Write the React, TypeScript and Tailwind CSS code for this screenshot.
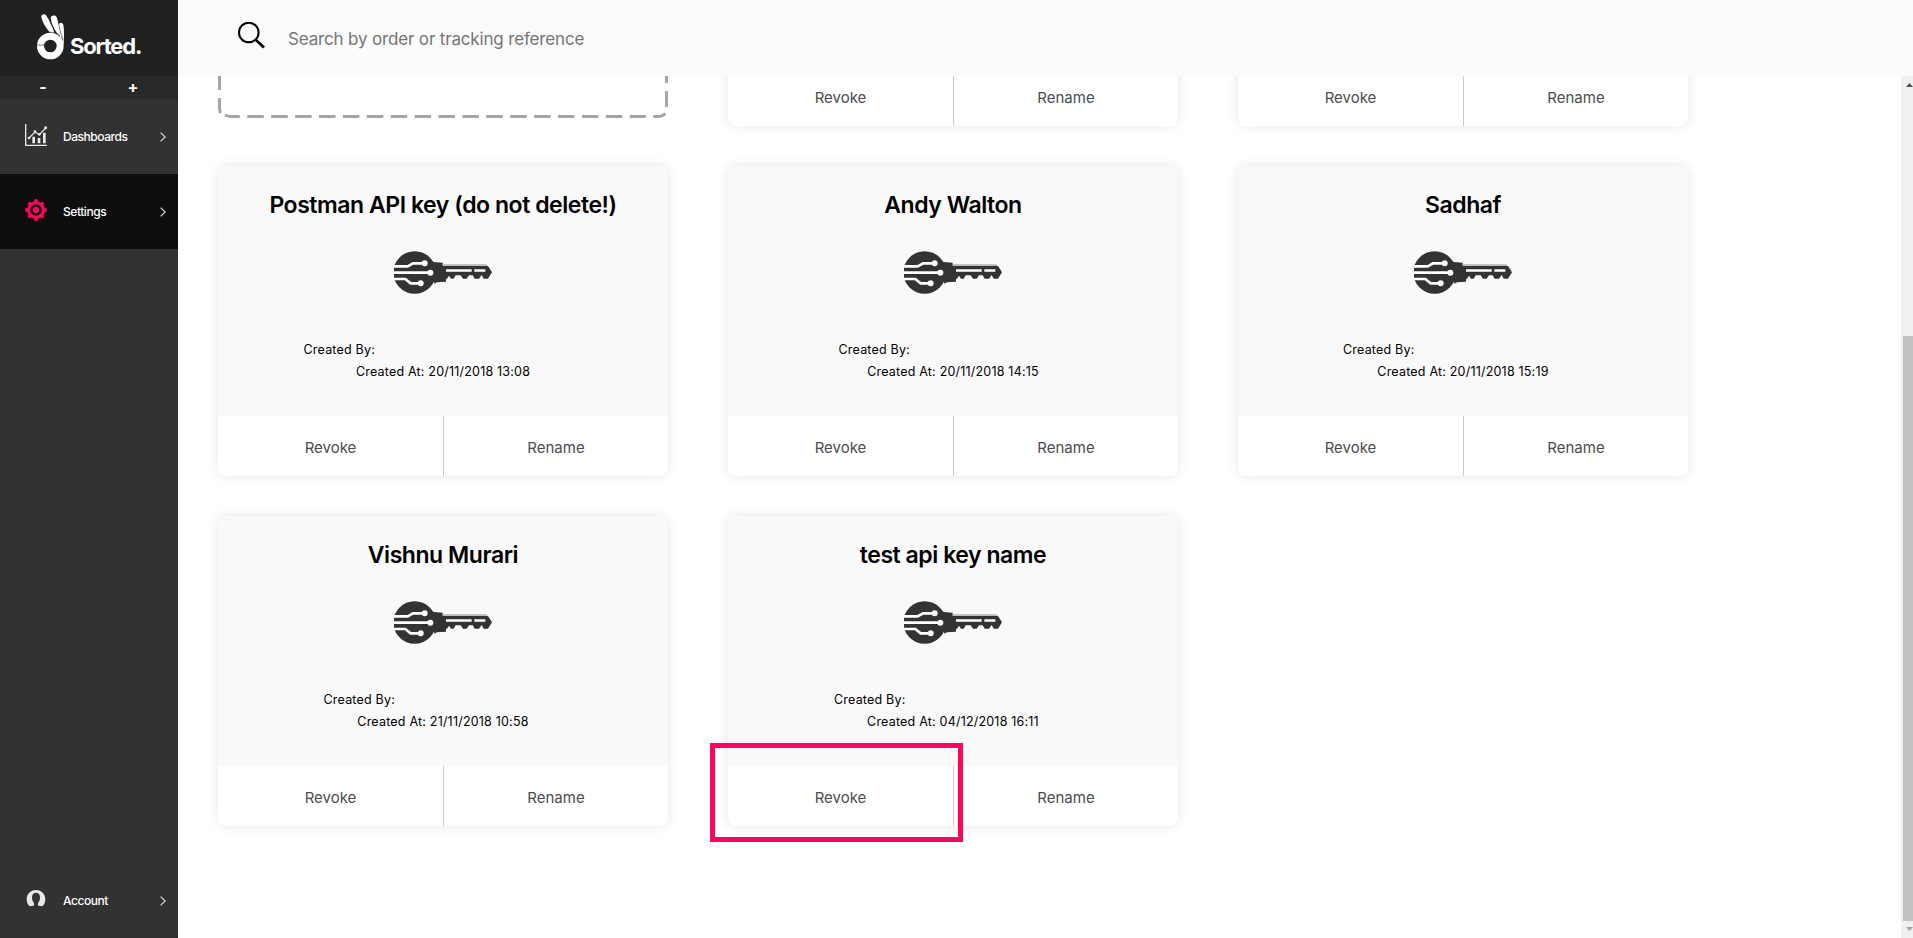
import type { ReactNode } from "react";

type ApiKey = { name: string; createdAt: string; byWidth: string };

const KEYS: ApiKey[] = [
  { name: "Postman API key (do not delete!)", createdAt: "20/11/2018 13:08", byWidth: "w-[279px]" },
  { name: "Andy Walton", createdAt: "20/11/2018 14:15", byWidth: "w-[229px]" },
  { name: "Sadhaf", createdAt: "20/11/2018 15:19", byWidth: "w-[240px]" },
  { name: "Vishnu Murari", createdAt: "21/11/2018 10:58", byWidth: "w-[239px]" },
  { name: "test api key name", createdAt: "04/12/2018 16:11", byWidth: "w-[238px]" },
];

function HandLogo() {
  return (
    <svg className="h-[47px] w-[31px] shrink-0" viewBox="105 38 93 141" fill="none">
      <path d="M124 50c-1-8 10-11 15-4 10 14 19 34 25 54l-14-4c-12-12-23-31-26-46z" fill="#fff" />
      <path d="M152 53c0-9 15-11 18-2 6 18 12 42 16 66l-12-12c-10-16-20-36-22-52z" fill="#fff" />
      <path d="M176 73c1-8 12-8 14 0 3 17 2 40 1 62l-6-22c-4-13-9-27-9-40z" fill="#fff" />
      <circle cx="151" cy="137" r="29.500" stroke="#fff" strokeWidth="21" />
      <path d="M110 134h22M148 58c5 17 16 34 32 52M175 64c3 20 8 36 14 56M150 96c12-1 22 3 30 11" stroke="#212121" strokeWidth="1.800" />
    </svg>
  );
}

function ChartIcon() {
  return (
    <svg className="size-[22px]" viewBox="0 0 66 66" fill="none" stroke="#e9e9e9">
      <path d="M2 0v64h64" strokeWidth="4" />
      <path d="M12 42l18-18 13 8 19-20" strokeWidth="3.500" />
      <g fill="#e9e9e9" stroke="none">
        <circle cx="12" cy="42" r="4" />
        <circle cx="30" cy="23" r="4" />
        <circle cx="43" cy="31" r="4" />
        <circle cx="62" cy="11" r="4.500" />
      </g>
      <path d="M26 38v20M42 42v16M58 26v32" strokeWidth="8" />
    </svg>
  );
}

function GearIcon() {
  return (
    <svg className="size-[22px]" viewBox="-33 -33 66 66" fill="none">
      <circle r="22" stroke="#ff0561" strokeWidth="9" />
      <circle r="9.5" fill="#ff0561" />
      <g stroke="#ff0561" strokeWidth="12" strokeLinecap="round">
        <path d="M0-27V-25M0 27V25M-27 0H-25M27 0H25M-18.500-18.500l1 1M18.500 18.500l-1-1M-18.500 18.500l1-1M18.500-18.500l-1 1" />
      </g>
    </svg>
  );
}

function AccountIcon() {
  return (
    <svg className="size-[22px]" viewBox="0 0 66 66" fill="#e9e9e9">
      <path d="M33 3C16 3 5 16 5 31c0 9 4 17 9 21l11-2c3-1 3-5 1-9-4-5-5-11-5-17 0-8 5-13 12-13s12 5 12 13c0 6-1 12-5 17-2 4-2 8 1 9l11 2c5-4 9-12 9-21C61 16 50 3 33 3z" />
    </svg>
  );
}

function KeyIcon() {
  return (
    <svg className="h-[45px] w-[100px]" viewBox="69 60 300 135" fill="none">
      <circle cx="134" cy="127.500" r="64" fill="#333" />
      <path
        d="M183 92l8 4 27 2v9h132c3 0 5 2 6 4l10 16-12 19h-13l-6-11-8 11h-13l-6-10h-11l-7 10h-11l-7-10h-15l-6 10h-8l-6-9-6 9h-3v9l-27 2-8 4z"
        fill="#333"
      />
      <path d="M218 104.500h132" stroke="#aaa" strokeWidth="3" />
      <path d="M66 60h6v135h-6z" fill="#f9f9f9" />
      <g stroke="#fff" strokeWidth="8">
        <path d="M66 109h47l16-9h33M66 128h112M66 147h40l16 13h28" />
        <path d="M228 121.500h77M313 121.500h33" />
      </g>
      <g fill="#fff">
        <circle cx="164" cy="100" r="9" />
        <circle cx="181" cy="128" r="9" />
        <circle cx="152" cy="160" r="9" />
      </g>
    </svg>
  );
}

function Chevron() {
  return (
    <svg className="ml-auto mr-3 h-[10px] w-[6px]" viewBox="0 0 6 10" fill="none" stroke="#ddd" strokeWidth="1.200">
      <path d="M.6.6L5.200 5 .6 9.400" />
    </svg>
  );
}

function NavItem({ icon, label, className = "" }: { icon: ReactNode; label: string; className?: string }) {
  return (
    <div className={`flex h-[75px] shrink-0 items-center pl-[25px] text-white ${className}`}>
      <span className="mb-[3px]">{icon}</span>
      <span className="ml-4 text-[12px] font-medium leading-5 tracking-[-0.45px]">{label}</span>
      <Chevron />
    </div>
  );
}

function Sidebar() {
  return (
    <nav className="flex w-[178px] shrink-0 flex-col bg-[#323232]">
      <div className="flex h-[76px] items-start bg-[#212121] pl-[35px] pt-[13px]">
        <HandLogo />
        <span className="ml-1 mt-[17px] text-[22px] font-bold leading-[32px] tracking-[-1.2px] text-white">
          Sorted.
        </span>
      </div>
      <div className="flex h-[23px] items-center bg-[#292929] text-center text-[16px] font-bold leading-[23px] text-white">
        <span className="flex-1 pr-[4px]">-</span>
        <span className="flex-1 pr-[2px]">+</span>
      </div>
      <NavItem icon={<ChartIcon />} label="Dashboards" />
      <NavItem icon={<GearIcon />} label="Settings" className="bg-[#0e0e0e]" />
      <NavItem icon={<AccountIcon />} label="Account" className="mt-auto border-b border-[#292929] pt-[2px]" />
    </nav>
  );
}

function Card({ item, highlighted = false }: { item?: ApiKey; highlighted?: boolean }) {
  return (
    <div className="relative flex h-[310px] flex-col rounded-lg bg-white shadow-[0_0_12px_rgba(0,0,0,0.1)]">
      <div className="flex h-[250px] flex-col items-center rounded-t-lg bg-[#f9f9f9] text-black">
        {item && (
          <>
            <h2 className="mt-[22px] text-[23px] font-semibold leading-[34px] tracking-[-0.45px]">{item.name}</h2>
            <div className="mt-7">
              <KeyIcon />
            </div>
            <div className="mt-[44px] text-[12.500px] leading-[22px] tracking-[0.2px]">
              <div className="flex flex-col items-center">
                <p className={item.byWidth}>Created By:</p>
                <p>Created At: {item.createdAt}</p>
              </div>
            </div>
          </>
        )}
      </div>
      <div className="flex h-[60px] text-[15px] text-[#4c4c50]">
        <button className="flex w-[226px] items-center justify-center border-r border-[#ccc] pt-1">Revoke</button>
        <button className="flex flex-1 items-center justify-center pt-1">Rename</button>
      </div>
      {highlighted && (
        <div className="absolute -left-[18px] top-[227px] h-[99px] w-[253px] border-[5px] border-[#ff0561]" />
      )}
    </div>
  );
}

function NewKeyOutline() {
  return (
    <div className="h-[310px]">
      <svg className="h-[302px] w-[450px]" viewBox="0 0 450 302" fill="none" stroke="#a4a4a9" strokeWidth="3">
        <path d="M1.500 258v16M1.500 282v10q0 3 1.200 5M448.500 251v16M448.500 275v16" />
        <path d="M29.300 300.500H428" strokeDasharray="16.500 7.400" />
        <path d="M7 299c2 1 3 1.500 6 1.500h8.700M435.300 300.500h5c3 0 5-1 7-3" />
      </svg>
    </div>
  );
}

function Scrollbar() {
  return (
    <div className="flex w-3 shrink-0 flex-col items-end bg-[#f0f0f0]">
      <svg className="mt-[7px] h-1 w-[7px]" viewBox="0 0 7 4" fill="#505050">
        <path d="M0 4L3.500 0 7 4z" />
      </svg>
      <div className="mt-[249px] h-[585px] w-[10px] bg-[#c1c1c1]" />
      <svg className="mt-[6px] h-1 w-[7px]" viewBox="0 0 7 4" fill="#a3a3a3">
        <path d="M0 0h7L3.500 4z" />
      </svg>
    </div>
  );
}

export default function App() {
  return (
    <div className="flex h-screen w-full overflow-hidden bg-white font-['Inter',sans-serif]">
      <Sidebar />
      <div className="flex min-w-0 flex-1 flex-col">
        <header className="flex h-[76px] shrink-0 items-start bg-[#fbfbfb] pl-[60px]">
          <svg className="mt-[22px] h-[27px] w-[27px]" viewBox="0 0 27 27" fill="none" stroke="#000" strokeWidth="2">
            <circle cx="10.800" cy="10.500" r="9.800" />
            <path d="M18 18l8 7.500" strokeWidth="2.800" />
          </svg>
          <span className="ml-[23px] mt-[25px] text-[17px] leading-[28px] tracking-[-0.16px] text-[#757575]">
            Search by order or tracking reference
          </span>
        </header>
        <div className="flex min-h-0 flex-1">
          <main className="min-w-0 flex-1 overflow-hidden pl-10">
            <div className="-mt-[260px] grid grid-cols-[450px_450px_450px] gap-x-[60px] gap-y-10">
              <NewKeyOutline />
              <Card />
              <Card />
              {KEYS.map((item, index) => (
                <Card key={item.name} item={item} highlighted={index === KEYS.length - 1} />
              ))}
            </div>
          </main>
          <Scrollbar />
        </div>
      </div>
    </div>
  );
}
